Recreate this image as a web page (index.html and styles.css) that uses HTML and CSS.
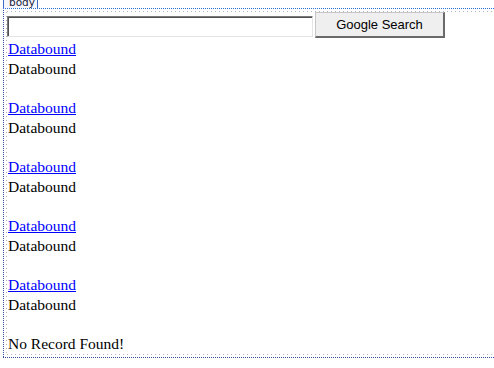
FILE: index.html
```html
<!DOCTYPE html>
<html>
<head>
<meta charset="utf-8">
<link rel="stylesheet" href="styles.css">
</head>
<body>
<div class="tab"><span class="tab-label">body</span></div>
<div class="frame">
  <div class="content">
    <div class="search-row">
      <input class="search-input" type="text">
      <button class="search-button" type="button">Google Search</button>
    </div>
    <div class="item"><a href="#" class="item-link">Databound</a><div class="item-text">Databound</div></div>
    <div class="item"><a href="#" class="item-link">Databound</a><div class="item-text">Databound</div></div>
    <div class="item"><a href="#" class="item-link">Databound</a><div class="item-text">Databound</div></div>
    <div class="item"><a href="#" class="item-link">Databound</a><div class="item-text">Databound</div></div>
    <div class="item"><a href="#" class="item-link">Databound</a><div class="item-text">Databound</div></div>
    <div class="empty">No Record Found!</div>
  </div>
</div>
</body>
</html>
```

FILE: styles.css
```css
html, body {
  margin: 0;
  padding: 0;
  background: #ffffff;
  overflow: hidden;
}

body {
  width: 494px;
  height: 368px;
}

.tab {
  margin-left: 3px;
  width: 35px;
  height: 8px;
  box-sizing: border-box;
  border-left: 1px solid #3a6cc4;
  border-right: 1px solid #3a6cc4;
  background: #f4f6fb;
  overflow: hidden;
}

.tab-label {
  display: block;
  margin-top: -4px;
  padding-left: 5px;
  font-family: "DejaVu Sans", sans-serif;
  font-size: 10.5px;
  line-height: 12px;
  color: #1a1a40;
}

.frame {
  margin-left: 3px;
  padding: 3px 0 3px 3px;
  background-image:
    linear-gradient(to right, #2f6fe0 1px, transparent 1px),
    linear-gradient(to right, #34509e 1px, transparent 1px),
    linear-gradient(to bottom, #34509e 1px, transparent 1px);
  background-size: 2px 1px, 2px 1px, 1px 2px;
  background-repeat: repeat-x, repeat-x, repeat-y;
  background-position: 0 0, 0 100%, 0 0;
}

.content {
  padding: 1px 0 1px 1px;
  background-image:
    linear-gradient(to right, #b8b8b8 1px, transparent 1px),
    linear-gradient(to right, #b8b8b8 1px, transparent 1px),
    linear-gradient(to bottom, #b8b8b8 1px, transparent 1px);
  background-size: 4px 1px, 4px 1px, 1px 4px;
  background-repeat: repeat-x, repeat-x, repeat-y;
  background-position: 1px 0, 1px 100%, 0 1px;
  font-family: "Liberation Serif", "Times New Roman", serif;
  font-size: 15.5px;
  line-height: 19.667px;
  color: #000000;
}

.search-row {
  display: flex;
  align-items: flex-start;
  height: 27px;
}

.search-input {
  box-sizing: border-box;
  width: 306px;
  height: 21px;
  margin: 4px 0 0 0;
  padding: 0;
  border-style: solid;
  border-width: 1px;
  border-color: #7a7a7a #e4e4e4 #e4e4e4 #7a7a7a;
  box-shadow: inset 1px 1px 0 #505050;
  background: #ffffff;
  outline: none;
}

.search-button {
  box-sizing: border-box;
  width: 130px;
  height: 26px;
  margin: 0 0 0 2px;
  padding: 0;
  border-style: solid;
  border-width: 1px 2px 2px 1px;
  border-color: #c6c6c6 #6a6a6a #6a6a6a #c6c6c6;
  background: #efefef;
  font-family: "Liberation Sans", Arial, sans-serif;
  font-size: 13px;
  color: #000000;
  line-height: 22px;
}

.item {
  margin-bottom: 19.667px;
}

.item-link {
  display: inline-block;
  padding-left: 1px;
  color: #0000ff;
  text-decoration: underline;
}

.item-text {
  padding-left: 1px;
}

.empty {
  padding-left: 1px;
}
```
